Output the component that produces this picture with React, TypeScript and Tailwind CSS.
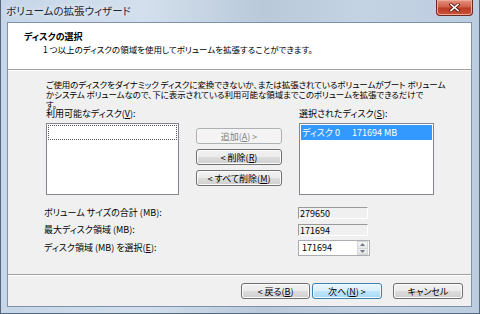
import React from "react";

const btnBase =
  "h-[16px] flex items-center justify-center rounded-[3px] border text-[9px] leading-none whitespace-nowrap";
const btnNormal =
  "border-[#707070] text-black bg-[linear-gradient(#f2f2f2,#ebebeb_50%,#dddddd_50%,#cfcfcf)] shadow-[inset_0_0_0_1px_#fbfbfb]";
const btnDefault =
  "border-[#3c7fb1] text-black bg-[linear-gradient(#eaf6fd,#d9f0fc_50%,#bee6fd_50%,#a7d9f5)] shadow-[inset_0_0_0_1px_#f4fbff]";
const btnDisabled = "border-[#adb2b5] text-[#838383] bg-[#f4f4f4]";

function U({ children }: { children: React.ReactNode }) {
  return <span className="underline underline-offset-[1px]">{children}</span>;
}

export default function App() {
  return (
    <div className="w-[480px] h-[314px] overflow-hidden flex flex-col bg-[linear-gradient(90deg,#c6d6e8,#d3dfec_30%,#b9c9da_55%,#c4d3e3_75%,#bccde0)] border-l border-r border-b border-[#55687e] font-['Noto_Sans_CJK_JP',sans-serif] [font-feature-settings:'palt'] text-black">
      {/* title bar */}
      <div className="h-[22px] flex items-start pl-[5px] pr-[6px]">
        <div className="pt-[5px] text-[10.5px] leading-[12px] text-[#1b2633] [text-shadow:0_0_6px_#ffffff]">
          ボリュームの拡張ウィザード
        </div>
        <div className="ml-auto w-[37px] h-[16px] rounded-b-[4px] border border-t-0 border-[#6b2a20] bg-[linear-gradient(#e5917f,#d0604a_45%,#bd3b24_55%,#c8533a)] shadow-[inset_0_0_0_1px_#eea999] flex items-center justify-center">
          <svg width="11" height="9" viewBox="0 0 11 9">
            <path d="M2 1.5 L9 7.5 M9 1.5 L2 7.5" stroke="#5a1a10" strokeWidth="3.2" strokeLinecap="square" />
            <path d="M2 1.5 L9 7.5 M9 1.5 L2 7.5" stroke="#ffffff" strokeWidth="1.6" strokeLinecap="square" />
          </svg>
        </div>
      </div>

      {/* client area */}
      <div className="flex-1 ml-[6px] mr-[7px] mb-[6px] border border-[#7d91a8] flex flex-col bg-[#f0f0f0]">
        {/* header */}
        <div className="h-[47px] bg-white border-b border-[#a0a0a0] pl-[16px] pt-[8px]">
          <div className="text-[9px] leading-[12px] font-bold">ディスクの選択</div>
          <div className="pl-[19px] text-[8.5px] leading-[12px]">
            1 つ以上のディスクの領域を使用してボリュームを拡張することができます。
          </div>
        </div>

        {/* body */}
        <div className="flex-1 border-t border-white pl-[38px] pt-[8px]">
          <div className="text-[8.5px] leading-[10px] tracking-[-0.1px] whitespace-nowrap">
            ご使用のディスクをダイナミック ディスクに変換できないか、または拡張されているボリュームがブート ボリューム
            <br />
            かシステム ボリュームなので、下に表示されている利用可能な領域までこのボリュームを拡張できるだけで
            <br />
            す。
          </div>

          <div className="flex">
            <div className="w-[133px]">
              <div className="text-[9px] leading-[10px]">
                利用可能なディスク(<U>V</U>):
              </div>
              <div className="mt-[4px] h-[72px] border border-[#828790] bg-white p-[1px]">
                <div className="h-[15px] border border-dotted border-[#555]" />
              </div>
            </div>

            <div className="ml-[17px] w-[86px] pt-[19px] flex flex-col gap-[5px]">
              <div className={`${btnBase} ${btnDisabled}`}>
                追加(<U>A</U>) &gt;
              </div>
              <div className={`${btnBase} ${btnNormal}`}>
                &lt; 削除(<U>R</U>)
              </div>
              <div className={`${btnBase} ${btnNormal}`}>
                &lt; すべて削除(<U>M</U>)
              </div>
            </div>

            <div className="ml-[17px] w-[135px]">
              <div className="text-[9px] leading-[10px]">
                選択されたディスク(<U>S</U>):
              </div>
              <div className="mt-[4px] h-[72px] border border-[#828790] bg-white p-[1px]">
                <div className="h-[15px] bg-[#3399ff] text-white text-[9px] leading-[15px] pl-[1px] whitespace-pre">
                  ディスク 0      171694 MB
                </div>
              </div>
            </div>
          </div>

          {/* fields */}
          <div className="mt-[11px] flex flex-col gap-[4px] -ml-[2px]">
            <div className="flex items-center h-[13px]">
              <div className="w-[254px] text-[9px] leading-[10px]">ボリューム サイズの合計 (MB):</div>
              <div className="w-[70px] h-[12px] border-t border-l border-[#9a9a9a] border-r border-b border-r-[#ffffff] border-b-[#ffffff] text-[9px] leading-[11px] pl-[1px]">
                279650
              </div>
            </div>
            <div className="flex items-center h-[13px]">
              <div className="w-[254px] text-[9px] leading-[10px]">最大ディスク領域 (MB):</div>
              <div className="w-[70px] h-[12px] border-t border-l border-[#9a9a9a] border-r border-b border-r-[#ffffff] border-b-[#ffffff] text-[9px] leading-[11px] pl-[1px]">
                171694
              </div>
            </div>
            <div className="flex items-center h-[16px]">
              <div className="w-[254px] text-[9px] leading-[10px]">
                ディスク領域 (MB) を選択(<U>E</U>):
              </div>
              <div className="w-[72px] h-[16px] border border-[#abadb3] bg-white flex items-center">
                <div className="flex-1 text-[9px] leading-[14px] pl-[3px]">171694</div>
                <div className="w-[11px] h-[14px] flex flex-col mr-[1px]">
                  <div className="flex-1 border border-[#d6d6d6] bg-[linear-gradient(#f7f7f7,#e6e6e6)] flex items-center justify-center">
                    <svg width="5" height="3" viewBox="0 0 5 3">
                      <path d="M0 3 L2.5 0 L5 3 Z" fill="#6d7a8a" />
                    </svg>
                  </div>
                  <div className="flex-1 border border-t-0 border-[#d6d6d6] bg-[linear-gradient(#f2f2f2,#e2e2e2)] flex items-center justify-center">
                    <svg width="5" height="3" viewBox="0 0 5 3">
                      <path d="M0 0 L2.5 3 L5 0 Z" fill="#6d7a8a" />
                    </svg>
                  </div>
                </div>
              </div>
            </div>
          </div>
        </div>

        {/* separator + footer */}
        <div className="border-t border-[#a0a0a0]" />
        <div className="h-[31px] border-t border-white flex justify-end items-start pt-[7px] pr-[8px]">
          <div className={`${btnBase} ${btnNormal} w-[69px]`}>
            &lt; 戻る(<U>B</U>)
          </div>
          <div className={`${btnBase} ${btnDefault} w-[70px] ml-[2px]`}>
            次へ(<U>N</U>) &gt;
          </div>
          <div className={`${btnBase} ${btnNormal} w-[70px] ml-[11px]`}>キャンセル</div>
        </div>
      </div>
    </div>
  );
}
